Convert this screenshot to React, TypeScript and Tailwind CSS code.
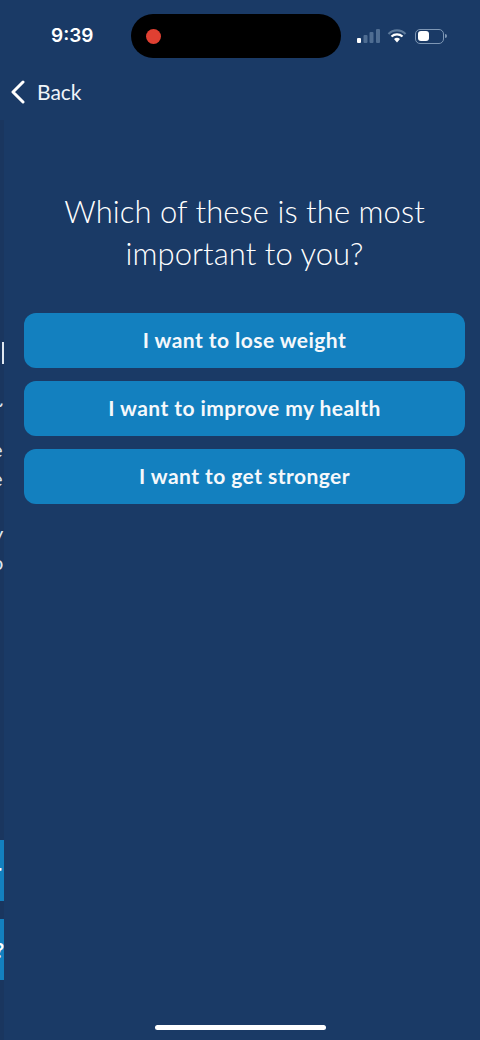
import React from 'react';

const options = ['I want to lose weight', 'I want to improve my health', 'I want to get stronger'];

function StatusIcons() {
  return (
    <div className="flex items-center">
      <svg width="24" height="16" viewBox="0 0 24 16" className="ml-[357px]">
        <rect x="0" y="10" width="4" height="5" rx="1" fill="#ffffff" />
        <rect x="6.500" y="7" width="4" height="8" rx="1" fill="#4f6d92" />
        <rect x="12.500" y="4" width="4" height="11" rx="1" fill="#4f6d92" />
        <rect x="19" y="1" width="4" height="14" rx="1" fill="#4f6d92" />
      </svg>
      <svg width="20" height="16" viewBox="0 0 20 16" className="ml-[6px]">
        <path d="M1.500 6 A12 12 0 0 1 18.500 6" fill="none" stroke="#5d7a9c" strokeWidth="2.200" />
        <path d="M4.500 8.500 A8 8 0 0 1 15.500 8.500" fill="none" stroke="#ffffff" strokeWidth="2.200" />
        <path d="M7 11 L10 14.500 L13 11 A4.500 4.500 0 0 0 7 11 Z" fill="#ffffff" />
      </svg>
      <div className="ml-[8px] flex h-[15px] w-[29px] items-center rounded-[5px] border border-[#7e97b5] p-[2px]">
        <div className="h-[10px] w-[11px] rounded-[3px] bg-white" />
      </div>
      <div className="ml-[1px] h-[4px] w-[1.500px] rounded-r-full bg-[#7e97b5]" />
    </div>
  );
}

// edge of the previous page, still showing on the left
function PeekingPage() {
  return (
    <div className="absolute left-0 top-[120px] h-[920px] w-[4px] overflow-hidden bg-[#1a365f] text-white font-['Lato',sans-serif]">
      <div className="absolute left-[2px] top-[222px] h-[22px] w-[2px] bg-[#dfe7f0]" />
      <div className="absolute left-[-9px] top-[273px] text-[22px] leading-none text-[#dfe7f0]">~</div>
      <div className="absolute left-[-8px] top-[319px] text-[20px] leading-none text-[#dfe7f0]">e</div>
      <div className="absolute left-[-8px] top-[348px] text-[20px] leading-none text-[#dfe7f0]">e</div>
      <div className="absolute left-[-7px] top-[403px] text-[20px] leading-none text-[#dfe7f0]">y</div>
      <div className="absolute left-[-8px] top-[432px] text-[20px] leading-none text-[#dfe7f0]">o</div>
      <div className="absolute left-0 top-[720px] flex h-[61px] w-[4px] items-center bg-[#1380bf] text-[20px] font-bold text-white"><span className="ml-[-6px]">r</span></div>
      <div className="absolute left-0 top-[799px] flex h-[61px] w-[4px] items-center bg-[#1380bf] text-[20px] font-bold text-white"><span className="ml-[-5px]">?</span></div>
    </div>
  );
}

export default function App() {
  return (
    <div className="relative flex h-[1040px] w-[480px] flex-col overflow-hidden bg-[#1a3a66] font-['Lato',sans-serif] text-white">
      <PeekingPage />

      {/* status bar */}
      <div className="relative h-[72px] shrink-0">
        <div className="absolute left-[51px] top-[25px] text-[19px] font-semibold leading-[22px] font-['Inter',sans-serif]">9:39</div>
        <div className="absolute left-[131px] top-[14px] flex h-[44px] w-[210px] items-center rounded-full bg-black pl-[15px]">
          <div className="h-[15px] w-[15px] rounded-full bg-[#e04032]" />
        </div>
        <div className="absolute left-0 top-[28px]">
          <StatusIcons />
        </div>
      </div>

      {/* back */}
      <div className="flex h-[40px] shrink-0 items-center pl-[10px]">
        <svg width="16" height="24" viewBox="0 0 16 24" fill="none" stroke="#ffffff" strokeWidth="3" strokeLinecap="round" strokeLinejoin="round">
          <path d="M13 2 L3 12 L13 22" />
        </svg>
        <span className="mb-[2px] ml-[11px] text-[21px] leading-none text-[#f0f4f8]">Back</span>
      </div>

      <h1 className="mt-[78px] pl-[49px] pr-[40px] text-center text-[31px] font-light leading-[42px] tracking-[0.05px] text-white">
        Which of these is the most important to you?
      </h1>

      <div className="mt-[39px] flex flex-col gap-[13px] pl-[24px] pr-[15px]">
        {options.map((o) => (
          <div key={o} className="flex h-[55px] items-center justify-center rounded-[12px] bg-[#1380bf] pb-[2px] text-[21px] font-bold tracking-[0.45px] text-[#f5f8fb]">
            {o}
          </div>
        ))}
      </div>

      {/* home indicator */}
      <div className="mt-auto mb-[10px] h-[5px] w-[171px] self-center rounded-full bg-white" />
    </div>
  );
}
